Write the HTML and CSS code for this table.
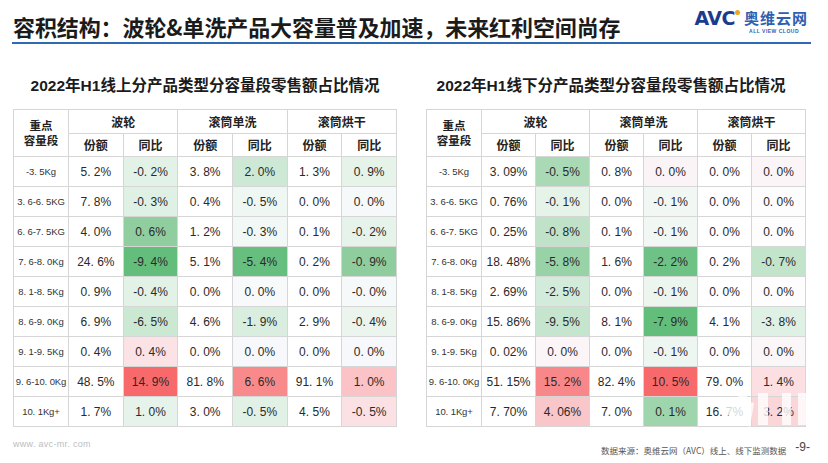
FILE: index.html
```html
<!DOCTYPE html>
<html lang="zh-CN">
<head>
<meta charset="utf-8">
<title>容积结构</title>
<link rel="stylesheet" href="styles.css">
</head>
<body>
<div class="page">
  <header class="topbar">
    <h1 class="title">容积结构：波轮&amp;单洗产品大容量普及加速，未来红利空间尚存</h1>
    <div class="logo">
      <div class="logo-main">
        <span class="avc">AVC<i class="dot"></i></span>
        <span class="cn">奥维云网</span>
      </div>
      <div class="logo-sub">ALL VIEW CLOUD</div>
    </div>
  </header>

  <main class="panels">
    <section class="panel left">
      <h2 class="subtitle">2022年H1线上分产品类型分容量段零售额占比情况</h2>
      <table class="grid">
        <colgroup><col class="c-label"><col><col><col><col><col><col></colgroup>
        <thead>
          <tr class="h1"><th rowspan="2" class="lab"><span class="l1">重点</span><span class="l2">容量段</span></th><th colspan="2">波轮</th><th colspan="2">滚筒单洗</th><th colspan="2">滚筒烘干</th></tr>
          <tr class="h2"><th>份额</th><th>同比</th><th>份额</th><th>同比</th><th>份额</th><th>同比</th></tr>
        </thead>
        <tbody>
          <tr><td class="rl">-3. 5Kg</td><td>5. 2%</td><td style="background:#e3f2e7">-0. 2%</td><td>3. 8%</td><td style="background:#cde9d5">2. 0%</td><td>1. 3%</td><td style="background:#e5f3e9">0. 9%</td></tr>
          <tr><td class="rl">3. 6-6. 5KG</td><td>7. 8%</td><td style="background:#dff0e4">-0. 3%</td><td>0. 4%</td><td style="background:#eef7f1">-0. 5%</td><td>0. 0%</td><td style="background:#f6f9fa">0. 0%</td></tr>
          <tr><td class="rl">6. 6-7. 5KG</td><td>4. 0%</td><td style="background:#90cd9f">0. 6%</td><td>1. 2%</td><td style="background:#f2f8f5">-0. 3%</td><td>0. 1%</td><td style="background:#e6f3ea">-0. 2%</td></tr>
          <tr><td class="rl">7. 6-8. 0Kg</td><td>24. 6%</td><td style="background:#63be7b">-9. 4%</td><td>5. 1%</td><td style="background:#66bf7e">-5. 4%</td><td>0. 2%</td><td style="background:#8fcc9e">-0. 9%</td></tr>
          <tr><td class="rl">8. 1-8. 5Kg</td><td>0. 9%</td><td style="background:#e3f2e7">-0. 4%</td><td>0. 0%</td><td style="background:#f7f9fb">0. 0%</td><td>0. 0%</td><td style="background:#f6f9f9">-0. 0%</td></tr>
          <tr><td class="rl">8. 6-9. 0Kg</td><td>6. 9%</td><td style="background:#cbe8d3">-6. 5%</td><td>4. 6%</td><td style="background:#d9eedf">-1. 9%</td><td>2. 9%</td><td style="background:#ebf5ee">-0. 4%</td></tr>
          <tr><td class="rl">9. 1-9. 5Kg</td><td>0. 4%</td><td style="background:#fbe2e5">0. 4%</td><td>0. 0%</td><td style="background:#f7f8fb">0. 0%</td><td>0. 0%</td><td style="background:#f7f8fb">0. 0%</td></tr>
          <tr><td class="rl">9. 6-10. 0Kg</td><td>48. 5%</td><td style="background:#f8696b">14. 9%</td><td>81. 8%</td><td style="background:#f98a8c">6. 6%</td><td>91. 1%</td><td style="background:#fbc3c6">1. 0%</td></tr>
          <tr><td class="rl">10. 1Kg+</td><td>1. 7%</td><td style="background:#e6f3ea">1. 0%</td><td>3. 0%</td><td style="background:#e2f1e6">-0. 5%</td><td>4. 5%</td><td style="background:#fbe1e4">-0. 5%</td></tr>
        </tbody>
      </table>
    </section>

    <section class="panel right">
      <h2 class="subtitle">2022年H1线下分产品类型分容量段零售额占比情况</h2>
      <table class="grid">
        <colgroup><col class="c-label"><col><col><col><col><col><col></colgroup>
        <thead>
          <tr class="h1"><th rowspan="2" class="lab"><span class="l1">重点</span><span class="l2">容量段</span></th><th colspan="2">波轮</th><th colspan="2">滚筒单洗</th><th colspan="2">滚筒烘干</th></tr>
          <tr class="h2"><th>份额</th><th>同比</th><th>份额</th><th>同比</th><th>份额</th><th>同比</th></tr>
        </thead>
        <tbody>
          <tr><td class="rl">-3. 5Kg</td><td>3. 09%</td><td style="background:#a9d9b5">-0. 5%</td><td>0. 8%</td><td style="background:#fbf4f7">0. 0%</td><td>0. 0%</td><td style="background:#fbf5f8">0. 0%</td></tr>
          <tr><td class="rl">3. 6-6. 5KG</td><td>0. 76%</td><td style="background:#e5f3e9">-0. 1%</td><td>0. 0%</td><td style="background:#f1f8f4">-0. 1%</td><td>0. 0%</td><td style="background:#fdfdfd">0. 0%</td></tr>
          <tr><td class="rl">6. 6-7. 5KG</td><td>0. 25%</td><td style="background:#bfe2c8">-0. 8%</td><td>0. 1%</td><td style="background:#f1f8f4">-0. 1%</td><td>0. 0%</td><td style="background:#fdfdfd">0. 0%</td></tr>
          <tr><td class="rl">7. 6-8. 0Kg</td><td>18. 48%</td><td style="background:#98d2a7">-5. 8%</td><td>1. 6%</td><td style="background:#6ec286">-2. 2%</td><td>0. 2%</td><td style="background:#c2e4cb">-0. 7%</td></tr>
          <tr><td class="rl">8. 1-8. 5Kg</td><td>2. 69%</td><td style="background:#d3ebda">-2. 5%</td><td>0. 0%</td><td style="background:#ecf6ef">-0. 1%</td><td>0. 0%</td><td style="background:#fdfdfd">0. 0%</td></tr>
          <tr><td class="rl">8. 6-9. 0Kg</td><td>15. 86%</td><td style="background:#c5e5ce">-9. 5%</td><td>8. 1%</td><td style="background:#63be7b">-7. 9%</td><td>4. 1%</td><td style="background:#dff0e4">-3. 8%</td></tr>
          <tr><td class="rl">9. 1-9. 5Kg</td><td>0. 02%</td><td style="background:#fbf5f8">0. 0%</td><td>0. 0%</td><td style="background:#edf6f0">-0. 1%</td><td>0. 0%</td><td style="background:#fbf7f9">0. 0%</td></tr>
          <tr><td class="rl">9. 6-10. 0Kg</td><td>51. 15%</td><td style="background:#f8878a">15. 2%</td><td>82. 4%</td><td style="background:#f8696b">10. 5%</td><td>79. 0%</td><td style="background:#fbdfe2">1. 4%</td></tr>
          <tr><td class="rl">10. 1Kg+</td><td>7. 70%</td><td style="background:#f9c6c9">4. 06%</td><td>7. 0%</td><td style="background:#9fd5ac">0. 1%</td><td>16. 7%</td><td style="background:#fbd6d9">3. 2%</td></tr>
        </tbody>
      </table>
      <svg class="watermark" aria-hidden="true" width="90" height="44" viewBox="0 0 90 44">
        <polygon points="0,26 30,2 26,16 34,18 30,42" fill="#ffffff"/>
        <rect x="38" y="8" width="10" height="32" fill="#ffffff"/>
        <rect x="62" y="8" width="9" height="32" fill="#ffffff"/>
        <rect x="78" y="8" width="10" height="32" fill="#ffffff"/>
      </svg>
    </section>
  </main>

  <footer class="footer">
    <span class="url">www. avc-mr. com</span>
    <div class="src-group">
      <span class="src">数据来源：奥维云网（AVC）线上、线下监测数据</span>
      <span class="pageno">-9-</span>
    </div>
  </footer>
</div>
</body>
</html>
```

FILE: styles.css
```css
* { box-sizing: border-box; }
html, body { margin: 0; padding: 0; }
body {
  width: 828px;
  height: 463px;
  overflow: hidden;
  background: #ffffff;
  color: #222;
  font-family: "Liberation Sans", "Noto Sans CJK SC", sans-serif;
}
.page {
  display: flex;
  flex-direction: column;
  height: 463px;
}

/* top bar */
.topbar {
  display: flex;
  justify-content: space-between;
  align-items: flex-end;
  height: 44px;
  margin: 0 17px 0 12px;
  border-bottom: 2px solid #2f6bb5;
}
.title {
  margin: 0 0 2px 1px;
  font-family: "Noto Sans CJK SC", sans-serif;
  font-size: 22px;
  line-height: 28px;
  font-weight: 700;
  color: #1b1b1b;
  letter-spacing: -0.1px;
}
.logo {
  display: flex;
  flex-direction: column;
  align-items: flex-end;
  margin: 0 3px 8px 0;
}
.logo-main {
  display: flex;
  align-items: center;
  gap: 4px;
}
.avc {
  position: relative;
  font-family: "DejaVu Sans", "Liberation Sans", sans-serif;
  font-weight: 700;
  font-size: 19px;
  line-height: 16px;
  color: #1d3b8e;
  letter-spacing: -0.5px;
  padding-right: 5px;
}
.avc .dot {
  position: absolute;
  right: 0;
  top: 0;
  width: 5px;
  height: 5px;
  border-radius: 50%;
  background: #f2a31b;
}
.cn {
  font-family: "Noto Sans CJK SC", sans-serif;
  font-weight: 700;
  font-size: 15px;
  line-height: 16px;
  color: #2f5fb0;
  letter-spacing: 1px;
}
.logo-sub {
  font-size: 5px;
  line-height: 6px;
  margin-top: 2px;
  margin-right: 9px;
  color: #2f5fb0;
  font-weight: 700;
  letter-spacing: 0.5px;
}

/* panels */
.panels {
  display: flex;
  gap: 29px;
  padding: 32px 0 0 13px;
}
.panel {
  position: relative;
  display: flex;
  flex-direction: column;
}
.panel.left { width: 384px; }
.panel.right { width: 380px; }
.subtitle {
  margin: 0 0 13px 0;
  font-family: "Liberation Sans", "Noto Sans CJK SC", sans-serif;
  font-size: 15.5px;
  line-height: 20px;
  font-weight: 700;
  color: #1b1b1b;
  text-align: center;
  white-space: nowrap;
}
.panel.right .subtitle { padding-right: 10px; }

.grid {
  width: 100%;
  table-layout: fixed;
  border-collapse: collapse;
  border: 1px solid #c9c9c9;
}
.grid col.c-label { width: 55px; }
.grid th, .grid td {
  border: 1px solid #d6d6d6;
  padding: 0;
  text-align: center;
  vertical-align: middle;
  white-space: nowrap;
}
.grid th {
  font-family: "Noto Sans CJK SC", sans-serif;
  font-weight: 700;
  font-size: 12px;
  line-height: 14px;
  color: #222;
}
.grid th.lab .l1,
.grid th.lab .l2 {
  display: block;
  font-size: 11.5px;
  line-height: 13px;
}
.grid th.lab .l2 { margin-top: 2px; }
.grid tr.h1 { height: 24px; }
.grid tr.h2 { height: 23px; }
.grid tbody tr { height: 30px; }
.grid td {
  font-size: 12px;
  color: #2a2a2a;
}
.grid td.rl {
  font-size: 9.5px;
  letter-spacing: -0.1px;
  color: #333;
}

/* watermark overlay */
.watermark {
  position: absolute;
  right: -4px;
  bottom: -2px;
  opacity: 0.8;
  pointer-events: none;
}

/* footer */
.footer {
  display: flex;
  justify-content: space-between;
  align-items: flex-start;
  padding: 11px 18px 0 13px;
}
.url {
  font-size: 9px;
  line-height: 12px;
  color: #bdbdbd;
  letter-spacing: 0.3px;
}
.src-group {
  display: flex;
  align-items: center;
  gap: 9px;
}
.src {
  font-family: "Noto Sans CJK SC", sans-serif;
  font-size: 8.5px;
  line-height: 12px;
  color: #555;
  margin-top: 6px;
}
.pageno {
  font-size: 12px;
  line-height: 14px;
  color: #444;
}
```
